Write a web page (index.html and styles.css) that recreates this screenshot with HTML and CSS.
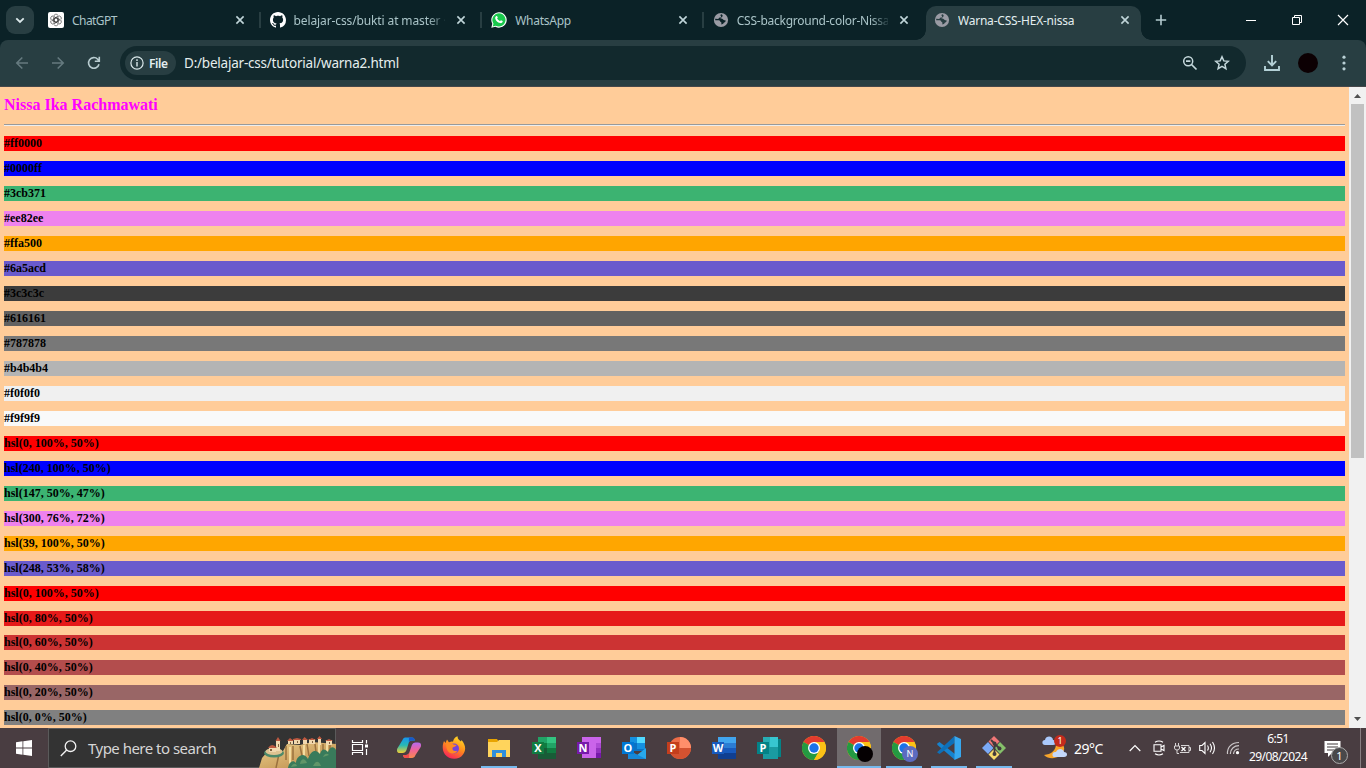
FILE: index.html
```html
<!DOCTYPE html>
<html lang="en">
<head>
<meta charset="utf-8">
<title>Warna-CSS-HEX-nissa</title>
<link rel="stylesheet" href="styles.css">
</head>
<body>
<svg class="defs" width="0" height="0">
  <defs>
    <symbol id="x" viewBox="0 0 10 10"><path d="M1.400 1.400l7.200 7.200M8.600 1.400L1.400 8.600" fill="none" stroke="currentColor" stroke-width="1.600"/></symbol>
    <symbol id="globe" viewBox="0 0 16 16"><circle cx="8" cy="8" r="7.100" fill="#9a9ba4"/><path d="M8.600 2.300c-1.200.3-1.500 1-.8 1.700.8.8.2 1.500-1 1.600-1 .1-.8 1.200-1.700 1.400l-2.900-.2v1.400h3.600c1.300.1 1.100 1.600 2.100 1.900.9.400.3 1.500.5 2.500l1.300-.5c1-.4.6-1.400 1.600-1.700.8-.2 1.100-1 1.700-1.700l-2.200-.8c-1.300-.3-1.200-1.400-2.600-1.300-.7 0-.9-.6-.3-.9 1.200-.5 1.900-1.200 1.700-2.400z" fill="var(--hole)"/></symbol>
    <symbol id="chrome" viewBox="0 0 24 24"><circle cx="12" cy="12" r="12" fill="#fbc116"/><path d="M12 12L1.600 6A12 12 0 0 1 22.400 6z" fill="#e33b2e"/><path d="M1.600 6A12 12 0 0 0 12 24l5.200-9L12 12z" fill="#249a42"/><path d="M12 6h10.400A12 12 0 0 1 12 24l5.200-9z" fill="#fbc116"/><circle cx="12" cy="12" r="6" fill="#fff"/><circle cx="12" cy="12" r="4.700" fill="#1b72e8"/></symbol>
    <linearGradient id="cpa" x1="0" y1="0" x2="0" y2="1"><stop offset="0" stop-color="#1595f0"/><stop offset=".5" stop-color="#28b9b3"/><stop offset="1" stop-color="#f4cf32"/></linearGradient>
    <linearGradient id="cpb" x1="0" y1="0" x2="0" y2="1"><stop offset="0" stop-color="#b469f0"/><stop offset=".5" stop-color="#f06395"/><stop offset="1" stop-color="#f78a4e"/></linearGradient>
    <linearGradient id="ffg" x1=".8" y1="0" x2=".3" y2="1"><stop offset="0" stop-color="#ffe226"/><stop offset=".5" stop-color="#ff8a1c"/><stop offset="1" stop-color="#f7205c"/></linearGradient>
    <linearGradient id="cliff" x1="0" y1="0" x2="1" y2="1"><stop offset="0" stop-color="#edd08c"/><stop offset="1" stop-color="#b88545"/></linearGradient>
  </defs>
</svg>

<header class="tabstrip">
  <div class="tab-search"><svg width="10" height="7" viewBox="0 0 10 7"><path d="M1.300 1.300L5 5l3.700-3.700" fill="none" stroke="#dce9eb" stroke-width="1.800"/></svg></div>
  <div class="tabs">
    <div class="tab">
      <svg class="fav" viewBox="0 0 16 16"><rect width="16" height="16" rx="2" fill="#fff"/><g fill="none" stroke="#333" stroke-width=".6"><path id="petal" d="M5.700 8.900V4.500a2.300 2.300 0 0 1 4.300-1.100M5.700 8.900l2.300 1.300 3.900-2.200"/><use href="#petal" transform="rotate(60 8 8)"/><use href="#petal" transform="rotate(120 8 8)"/><use href="#petal" transform="rotate(180 8 8)"/><use href="#petal" transform="rotate(240 8 8)"/><use href="#petal" transform="rotate(300 8 8)"/></g></svg>
      <span class="title t-gpt">ChatGPT</span><svg class="close"><use href="#x"/></svg>
    </div>
    <div class="tab">
      <svg class="fav" viewBox="0 0 16 16"><path fill="#fff" d="M8 0C3.580 0 0 3.580 0 8c0 3.540 2.290 6.530 5.470 7.590.4.070.55-.17.55-.38 0-.19-.01-.82-.01-1.490-2.010.37-2.530-.49-2.690-.94-.09-.23-.48-.94-.82-1.130-.28-.15-.68-.52-.01-.53.63-.01 1.080.58 1.230.82.72 1.210 1.870.87 2.330.66.070-.52.28-.87.51-1.070-1.780-.2-3.640-.89-3.640-3.950 0-.87.31-1.590.82-2.150-.08-.2-.36-1.020.08-2.120 0 0 .67-.21 2.200.82.64-.18 1.320-.27 2-.27s1.360.09 2 .27c1.530-1.040 2.200-.82 2.200-.82.44 1.100.16 1.920.08 2.120.51.56.82 1.270.82 2.150 0 3.070-1.870 3.750-3.650 3.950.29.25.54.73.54 1.480 0 1.070-.01 1.930-.01 2.200 0 .21.15.46.55.38A8.010 8.010 0 0 0 16 8c0-4.420-3.580-8-8-8z"/></svg>
      <span class="title fade t-git">belajar-css/bukti at master ·</span><svg class="close"><use href="#x"/></svg>
    </div>
    <div class="tab">
      <svg class="fav" viewBox="0 0 16 16"><path d="M.3 15.800l1-4A7.700 7.700 0 1 1 4.400 14.800z" fill="#fff"/><path d="M1.700 14.400l.8-2.700A6.600 6.600 0 1 1 4.700 13.700z" fill="#19c84c"/><path d="M5 4.200c.6-.5 1.100-.3 1.300.2l.5 1.200-.7 1c.7 1.300 1.600 2 2.900 2.600l.9-1 1.800.9c.2 1.800-1.500 2.300-2.500 2C6.500 10.400 4.900 8.900 4.300 6.800 4 5.800 4.400 4.700 5 4.200z" fill="#fff"/></svg>
      <span class="title t-wa">WhatsApp</span><svg class="close"><use href="#x"/></svg>
    </div>
    <div class="tab no-sep">
      <svg class="fav"><use href="#globe"/></svg>
      <span class="title fade t-css">CSS-background-color-Nissa</span><svg class="close"><use href="#x"/></svg>
    </div>
    <div class="tab active no-sep">
      <svg class="fav"><use href="#globe"/></svg>
      <span class="title t-hex">Warna-CSS-HEX-nissa</span><svg class="close"><use href="#x"/></svg>
    </div>
  </div>
  <svg class="new-tab" width="12" height="12" viewBox="0 0 12 12"><path d="M6 .8v10.400M.8 6h10.400" stroke="#b4cbd0" stroke-width="1.600"/></svg>
  <div class="window-controls">
    <svg viewBox="0 0 12 12"><path d="M1 6.500h10" stroke="#fff"/></svg>
    <svg viewBox="0 0 12 12"><path d="M1.500 3.500h7v7h-7zM3.500 3V1.500h7v7H9" fill="none" stroke="#fff"/></svg>
    <svg viewBox="0 0 12 12"><path d="M1 1l10 10M11 1L1 11" stroke="#fff" stroke-width="1.200"/></svg>
  </div>
</header>

<nav class="toolbar">
  <div class="nav-buttons">
    <svg viewBox="0 0 14 14"><path d="M13 7H2M7.300 1.500L1.800 7l5.500 5.500" fill="none" stroke="#657a7f" stroke-width="1.600"/></svg>
    <svg viewBox="0 0 14 14"><path d="M1 7h11M6.700 1.500L12.200 7l-5.500 5.500" fill="none" stroke="#657a7f" stroke-width="1.600"/></svg>
    <svg viewBox="0 0 14 14"><path d="M12 8.200A5.300 5.300 0 1 1 10.700 3.200L12 4.600M12.300.8v4.500H7.800" fill="none" stroke="#b8ccd0" stroke-width="1.600"/></svg>
  </div>
  <div class="omnibox">
    <div class="file-chip"><svg width="14" height="14" viewBox="0 0 14 14"><circle cx="7" cy="7" r="6.100" fill="none" stroke="#dbe9eb" stroke-width="1.200"/><path d="M7 3.300v1.600M7 6.100v4.500" stroke="#dbe9eb" stroke-width="1.400"/></svg><span>File</span></div>
    <span class="url">D:/belajar-css/tutorial/warna2.html</span>
    <svg class="zoom-icon" width="16" height="16" viewBox="0 0 16 16"><circle cx="6.200" cy="6.200" r="4.500" fill="none" stroke="#c5d8dc" stroke-width="1.500"/><path d="M4 6.200h4.400M9.500 9.500l5 5" stroke="#c5d8dc" stroke-width="1.700"/></svg>
    <svg class="star" width="16" height="16" viewBox="0 0 16 16"><path d="M8 1.800l1.800 4.100 4.500.4-3.400 3 1 4.400L8 11.400l-3.900 2.300 1-4.400-3.400-3 4.500-.4z" fill="none" stroke="#c5d8dc" stroke-width="1.500"/></svg>
  </div>
  <svg class="download" width="16" height="16" viewBox="0 0 16 16"><path d="M8 0v10M3.800 6.200L8 10.400l4.200-4.200M1 11v4h14v-4" fill="none" stroke="#b4d1d7" stroke-width="1.900"/></svg>
  <span class="avatar"></span>
  <svg class="kebab" width="4" height="16" viewBox="0 0 4 16"><g fill="#b9d0d5"><circle cx="2" cy="2.200" r="1.600"/><circle cx="2" cy="8" r="1.600"/><circle cx="2" cy="13.800" r="1.600"/></g></svg>
</nav>

<div class="viewport">
  <main class="page">
    <h1 class="name">Nissa Ika Rachmawati</h1>
    <hr class="rule">
    <div class="swatches">
      <h2 style="background-color:#ff0000">#ff0000</h2>
      <h2 style="background-color:#0000ff">#0000ff</h2>
      <h2 style="background-color:#3cb371">#3cb371</h2>
      <h2 style="background-color:#ee82ee">#ee82ee</h2>
      <h2 style="background-color:#ffa500">#ffa500</h2>
      <h2 style="background-color:#6a5acd">#6a5acd</h2>
      <h2 style="background-color:#3c3c3c">#3c3c3c</h2>
      <h2 style="background-color:#616161">#616161</h2>
      <h2 style="background-color:#787878">#787878</h2>
      <h2 style="background-color:#b4b4b4">#b4b4b4</h2>
      <h2 style="background-color:#f0f0f0">#f0f0f0</h2>
      <h2 style="background-color:#f9f9f9">#f9f9f9</h2>
      <h2 style="background-color:hsl(0,100%,50%)">hsl(0, 100%, 50%)</h2>
      <h2 style="background-color:hsl(240,100%,50%)">hsl(240, 100%, 50%)</h2>
      <h2 style="background-color:hsl(147,50%,47%)">hsl(147, 50%, 47%)</h2>
      <h2 style="background-color:hsl(300,76%,72%)">hsl(300, 76%, 72%)</h2>
      <h2 style="background-color:hsl(39,100%,50%)">hsl(39, 100%, 50%)</h2>
      <h2 style="background-color:hsl(248,53%,58%)">hsl(248, 53%, 58%)</h2>
      <h2 style="background-color:hsl(0,100%,50%)">hsl(0, 100%, 50%)</h2>
      <h2 class="snug" style="background-color:hsl(0,80%,50%)">hsl(0, 80%, 50%)</h2>
      <h2 style="background-color:hsl(0,60%,50%)">hsl(0, 60%, 50%)</h2>
      <h2 style="background-color:hsl(0,40%,50%)">hsl(0, 40%, 50%)</h2>
      <h2 style="background-color:hsl(0,20%,50%)">hsl(0, 20%, 50%)</h2>
      <h2 style="background-color:hsl(0,0%,50%)">hsl(0, 0%, 50%)</h2>
    </div>
  </main>
  <aside class="scrollbar">
    <svg width="17" height="17" viewBox="0 0 17 17"><path d="M5 11l3.500-4 3.500 4z" fill="#505050"/></svg>
    <span class="thumb"></span>
    <svg width="17" height="17" viewBox="0 0 17 17"><path d="M5 6l3.500 4L12 6z" fill="#505050"/></svg>
  </aside>
</div>

<footer class="taskbar">
  <div class="start"><svg width="16" height="16" viewBox="0 0 16 16"><path d="M0 2.200l6.500-.9v6.200H0zM7.300 1.200L16 0v7.500H7.300zM0 8.400h6.500v6.300L0 13.800zM7.300 8.400H16V16l-8.700-1.200z" fill="#fff"/></svg></div>
  <div class="search">
    <svg width="17" height="17" viewBox="0 0 17 17"><circle cx="10.500" cy="6.200" r="5.300" fill="none" stroke="#f2f2f2" stroke-width="1.300"/><path d="M6.700 10L.8 16" stroke="#f2f2f2" stroke-width="1.400"/></svg>
    <span>Type here to search</span>
    <svg class="scene" width="77" height="32" viewBox="0 0 77 32">
      <path d="M0 32L3 22 9 15 24 15 28 8 41 9 53 6 77 8V32z" fill="url(#cliff)"/>
      <path d="M20 18l-3 14M27 10v14M34 10v14M41 10l2 10M48 8l2 12M56 8l2 16M64 8v16M71 9v15" stroke="#9a713e" stroke-width="1.500"/>
      <path d="M31 11v20M45 9v12M60 9v10M68 9v13" stroke="#f3dca0" stroke-width="2"/>
      <ellipse cx="15" cy="17" rx="10" ry="4.500" fill="#4d8a6a"/><ellipse cx="15" cy="15.500" rx="8.500" ry="3.500" fill="#dfc391"/>
      <path d="M10 11h7v5h-7zM17 5h4v10h-4zM29 4h5v4h-5zM35 3h6v5h-6zM44 3h4v5h-4zM50 3h6v5h-6zM59 2h3v7h-3zM67 4h6v5h-6z" fill="#f1d8ae"/>
      <path d="M9 12q4-6 9 0zM16.500 5L19 1l2.500 4zM28 5l3-3 4 3zM34 3l4-1 4 1v1h-8zM43 4l2.500-3L49 4zM49 4l4-2 4 2zM58 3l2.500-3L63 3zM66 5l4-2 4 2z" fill="#be5940"/>
      <path d="M11 13h2v2h-2zM19 8h1v3h-1zM31 6h1v2h-1zM38 5h1v2h-1zM53 5h1v2h-1zM70 6h1v2h-1z" fill="#80613e"/>
      <path d="M29 32c1-6 5-9 8-5 0-7 8-12 12-4 3-9 8-10 12-5 2-6 5-5 8-2 2-6 6-6 8-2v18z" fill="#397b5b"/>
      <path d="M32 31c2-4 5-4 6-1M41 28c1-6 5-6 7-1M54 30c3-6 6-5 8 0M64 21c2-4 4-4 6-2" fill="#609668"/>
    </svg>
  </div>
  <div class="task-view"><svg width="18" height="18" viewBox="0 0 18 18"><path d="M1.500 1v2.500h10V1M1.500 16v-2.500h10V16M1.500 5.500h10v6h-10zM15.500 1v3.500M15.500 10v6" fill="none" stroke="#fff" stroke-width="1.200"/><path d="M14 5.500h3v3h-3z" fill="#fff"/></svg></div>
  <div class="apps">
    <div class="app"><svg viewBox="0 0 24 24"><path d="M5.500 4c.7-2 2-2.500 3.500-2.500h6c2 0 2.600 1.500 3 3h-3c-2 0-3 1-3.500 3L9.500 14c-.7 2-2 3-4 3H3c-3 0-3.500-2-2.700-4.500z" fill="url(#cpa)"/><path d="M18.500 19c-.7 2.200-2 3-3.500 3H9c-2 0-2.600-1-3-3h3c2 0 3-1 3.500-3l2.200-6.500c.7-2 2-3 4-3H21c3 0 3.500 2 2.700 4.500z" fill="url(#cpb)"/><path d="M12 1.500h3c2 0 2.600 1.500 3 3h-3c-1.500 0-2.600.7-3.200 2z" fill="#1858ca"/><path d="M6 19h3c1.500 0 2.500-.7 3.100-2L12 22H9c-2 0-2.700-1-3-3z" fill="#f14c4b"/></svg></div>
    <div class="app"><svg viewBox="0 0 24 24"><path d="M2 5l1.500 2L5 3.500l2 3c2-1 3-1 4-.8C11.500 3 13 1 15.500.2c0 3 2 4 3.500 5.300l.5-1.500c4 4.500 5 10 1.500 14.500C17 24.500 7 24 3 18.500 0 14.500.3 9 2 5z" fill="url(#ffg)"/><circle cx="12" cy="12.500" r="5" fill="#7543dc"/><path d="M4 7c3-1 6 0 7.500 1.500l3 .5c-.5 2-3.500 1.500-4 3-.5 2.500 2 4 5 2.500-1.500 4-8 4-10 0-1-2-1.500-4-1.500-7.500z" fill="#ff8a24"/></svg></div>
    <div class="app open"><svg viewBox="0 0 24 24"><path d="M1 3h9l2 3h11v15H1z" fill="#e8a400"/><path d="M1 6h9l2-2h11v17H1z" fill="#ffd45c"/><path d="M5 21v-7h14v7h-4v-4H9v4z" fill="#2f8edb"/></svg></div>
    <div class="app"><svg class="office" viewBox="0 0 24 24"><path d="M6 1h18v22H6z" fill="#21a366"/><path d="M6 7h9v5H6z" fill="#107c41"/><path d="M15 1h9v6h-9z" fill="#33c481"/><path d="M6 12h18v11H6z" fill="#185c37"/><path d="M15 12h9v5h-9z" fill="#107c41"/><path d="M0 6h12v12H0z" fill="#107c41"/><text x="6" y="16">X</text></svg></div>
    <div class="app"><svg class="office" viewBox="0 0 24 24"><path d="M5 1h19v21H5z" fill="#ca64ea"/><path d="M19 7h5v5h-5z" fill="#ae4bd5"/><path d="M19 12h5v5h-5z" fill="#9332bf"/><path d="M19 17h5v5h-5z" fill="#7719aa"/><path d="M0 6h12v12H0z" fill="#7719aa"/><text x="6" y="16">N</text></svg></div>
    <div class="app"><svg class="office" viewBox="0 0 24 24"><path d="M8 1h15v14H8z" fill="#0a72c4"/><path d="M15 1h8v6h-8z" fill="#50d9ff"/><path d="M8 1h7v6H8z" fill="#1490df"/><path d="M15 7h8v6h-8z" fill="#1490df"/><path d="M24 12v11H6v-9l9 5z" fill="#28a8ea"/><path d="M6 14v9h18z" fill="#1688d8"/><path d="M0 6h12v12H0z" fill="#0078d4"/><text x="6" y="16">O</text></svg></div>
    <div class="app"><svg class="office" viewBox="0 0 24 24"><circle cx="13" cy="12" r="11" fill="#ed6c47"/><path d="M13 1a11 11 0 0 1 11 11H13z" fill="#ff8f6b"/><path d="M2 12h22a11 11 0 0 1-22 0z" fill="#d35230"/><path d="M0 6h12v12H0z" fill="#c43e1c"/><text x="6" y="16">P</text></svg></div>
    <div class="app"><svg class="office" viewBox="0 0 24 24"><path d="M6 1h18v6H6z" fill="#41a5ee"/><path d="M6 7h18v5H6z" fill="#2b7cd3"/><path d="M6 12h18v5H6z" fill="#185abd"/><path d="M6 17h18v6H6z" fill="#103f91"/><path d="M0 6h12v12H0z" fill="#185abd"/><text x="6" y="16">W</text></svg></div>
    <div class="app"><svg class="office" viewBox="0 0 24 24"><path d="M18 3h6v18h-6z" fill="#038387"/><path d="M6 1h15v22H6z" fill="#1a9ba1"/><path d="M6 1h15v10H6z" fill="#37c6d0"/><path d="M6 1h7v10H6z" fill="#27aeb4"/><path d="M0 6h12v12H0z" fill="#038387"/><text x="6" y="16">P</text></svg></div>
    <div class="app"><svg viewBox="0 0 24 24"><use href="#chrome"/></svg></div>
    <div class="app open current"><svg viewBox="0 0 24 24"><use href="#chrome"/></svg><span class="profile black"></span></div>
    <div class="app open"><svg viewBox="0 0 24 24"><use href="#chrome"/></svg><span class="profile">N</span></div>
    <div class="app open"><svg viewBox="0 0 24 24"><path d="M0 7.800L2.500 6 18 18v6L.5 9z" fill="#1683ce"/><path d="M0 16.200L17.500 0v7L2.500 18z" fill="#0e70b8"/><path d="M17.500 0L24 3v18l-6.500 3z" fill="#37a8ee"/></svg></div>
    <div class="app open"><svg viewBox="0 0 24 24"><path d="M12 0l5.500 5.500L12 11 6.500 5.500z" fill="#f27777"/><path d="M0 12l6-6 5.500 6L6 18z" fill="#7baaf7"/><path d="M12.500 12L18 6l6 6-6 6z" fill="#85c06a"/><path d="M12 13l5.500 5.500L12 24l-5.500-5.500z" fill="#f7dc6b"/><path d="M9 4l8 8M12.500 7v11" stroke="#413b3d" stroke-width="1.800"/><g fill="#413b3d"><circle cx="12.500" cy="7.500" r="2"/><circle cx="17.500" cy="12.500" r="2"/><circle cx="12.500" cy="18" r="2"/></g></svg></div>
  </div>
  <div class="tray">
    <div class="weather"><svg width="25" height="24" viewBox="0 0 25 24"><path d="M14 5c1 9-4 13-12 14 6 6 18 3 20-5 1-5-3-8-8-9z" fill="#f7a52b"/><path d="M3 9C-.5 9-.5 4 3 4c1-5 8-4 8 0 4 0 4 5 0 5z" fill="#aac9fb"/><path d="M13 21c-4 0-3-6 1-5 2-5 8-3 8 0 4 0 4 5 0 5z" fill="#c4d8fb"/></svg><b>1</b></div>
    <span class="temp">29°C</span>
    <svg class="chev" width="12" height="8" viewBox="0 0 12 8"><path d="M.7 7L6 1.500 11.300 7" fill="none" stroke="#fff" stroke-width="1.200"/></svg>
    <svg class="meet" width="12" height="16" viewBox="0 0 12 16"><path d="M2 2.200q4-2.500 8 0M2 13.800q4 2.500 8 0M1 4.700h7v6.600H1zM8 7l3-1.500v5L8 9" fill="none" stroke="#fff" stroke-width="1.100"/></svg>
    <svg class="battery" width="17" height="13" viewBox="0 0 17 13"><path d="M1.500 1v3M4.500 1v3M.5 4h5v2q0 2-2.500 2T.5 6zM3 8v3.500h2M7 3.500h8v7H6M15 5.500h1.500v3H15" fill="none" stroke="#d8d5d6"/><path d="M7.500 5l4 4M11.500 5l-4 4" stroke="#fff" stroke-width="1.300"/></svg>
    <svg class="speaker" width="17" height="14" viewBox="0 0 17 14"><path d="M.7 4.500H3l3-3v11l-3-3H.7zM8.500 4.500q1.700 2.500 0 5M11 2.700q3 4.300 0 8.600M13.500 1q4 6 0 12" fill="none" stroke="#fff" stroke-width="1.100"/></svg>
    <svg class="wifi" width="14" height="14" viewBox="0 0 14 14"><path d="M1.500 13C1 6 6 1.500 13 1.500M4.300 13C4.300 8 8 4.700 13 4.700M7.500 13c.2-3 2.500-5 5.500-5" fill="none" stroke="#cbc7c9" stroke-width="1.200"/><circle cx="11.500" cy="11.700" r="1.600" fill="#fff"/></svg>
    <div class="clock"><span>6:51</span><span class="date">29/08/2024</span></div>
    <div class="notice"><svg width="17" height="17" viewBox="0 0 17 17"><path d="M.5 1h16v12H8l-4 4v-4H.5z" fill="#fff"/><path d="M3 4h11M3 7h11M3 10h8" stroke="#41383b" stroke-width="1.200"/></svg><b>1</b></div>
  </div>
</footer>
</body>
</html>
```
FILE: styles.css
```css
* { box-sizing: border-box; }
body { margin: 0; width: 1366px; height: 768px; overflow: hidden; display: flex; flex-direction: column; background: #0b2227; font-family: "Noto Sans", sans-serif; }
svg { display: block; flex: none; }
.defs { position: absolute; }

.tabstrip { height: 40px; flex: none; display: flex; align-items: center; background: #0b2227; }
.tab-search { width: 28px; height: 28px; margin: 0 4px 0 6px; border-radius: 9px; background: #283e42; display: flex; align-items: center; justify-content: center; }
.tabs { display: flex; height: 40px; width: 1108px; flex: none; }
.tab { --hole: #0b2227; position: relative; width: 221.6px; display: flex; align-items: center; padding: 0 15px 0 10px; color: #aac4c8; }
.tab:not(.no-sep)::after { content: ""; position: absolute; right: -1px; top: 12px; width: 2px; height: 16px; background: #283e42; }
.fav { width: 16px; height: 16px; margin-right: 8px; }
.title { font-size: 12px; line-height: 18px; padding-top: 1px; white-space: nowrap; overflow: hidden; width: 152px; }
.fade { -webkit-mask-image: linear-gradient(90deg, #000 134px, transparent 154px); mask-image: linear-gradient(90deg, #000 134px, transparent 154px); }
.close { width: 10px; height: 10px; margin-left: 11px; color: #c0d5d9; }
.tab.active { --hole: #283e42; width: 215px; height: 34px; margin: 6px 0 0 1.600px; padding: 0 0 6px 8px; border-radius: 10px 10px 0 0; background: #283e42; color: #e3eef0; }
.tab.active .close { margin-left: 10px; }
.tab.active::before, .tab.active::after { content: ""; position: absolute; bottom: 0; width: 10px; height: 10px; }
.tab.active::before { left: -10px; background: radial-gradient(circle at 0 0, transparent 9.500px, #283e42 10px); }
.tab.active::after { right: -10px; background: radial-gradient(circle at 100% 0, transparent 9.500px, #283e42 10px); }
.t-gpt { letter-spacing: -.55px; }
.t-git { letter-spacing: -.12px; }
.t-wa { letter-spacing: -.25px; }
.t-css { letter-spacing: -.25px; }
.t-hex { letter-spacing: -.22px; }
.new-tab { margin-left: 9px; }
.window-controls { display: flex; gap: 34px; margin-left: auto; padding-right: 17px; }
.window-controls svg { width: 12px; height: 12px; }

.toolbar { height: 47px; flex: none; display: flex; align-items: center; background: #283e42; border-radius: 8px 8px 0 0; border-bottom: 1px solid #45474a; }
.nav-buttons { display: flex; gap: 22px; padding-left: 15px; width: 120px; }
.nav-buttons svg { width: 14px; height: 14px; }
.omnibox { width: 1126px; height: 34px; display: flex; align-items: center; border-radius: 17px; background: #12292d; padding: 0 16px 0 5px; }
.file-chip { width: 51px; height: 24px; display: flex; align-items: center; gap: 5px; padding-left: 5px; border-radius: 12px; background: #283e42; color: #e3eef0; font-size: 12px; font-weight: 600; letter-spacing: -.4px; }
.url { margin-left: 8px; color: #e5eeee; font-size: 13.500px; letter-spacing: -.22px; }
.zoom-icon { margin-left: auto; }
.star { margin-left: 16px; }
.download { margin-left: 18px; }
.avatar { width: 20px; height: 20px; margin-left: 18px; border-radius: 50%; background: #0c0003; }
.kebab { margin-left: 24px; }

.viewport { flex: 1; min-height: 0; display: flex; }
.page { flex: 1; padding: 0 4px; overflow: hidden; background: #ffcc99; font-family: "Liberation Serif", serif; }
.name { margin: 9px 0 10px; font-size: 16px; line-height: 18px; color: #f0f; }
.rule { height: 2px; margin: 0 0 10px; border: 0; border-top: 1px solid #9a9a9a; border-bottom: 1px solid #eee; }
.swatches h2 { height: 15px; margin: 0 0 10px; font-size: 12px; line-height: 14px; color: #000; }
.swatches .snug { margin-bottom: 9px; }
.scrollbar { width: 17px; background: #f1f1f1; display: flex; flex-direction: column; }
.thumb { width: 13px; height: 354px; margin: 0 2px auto; background: #c1c1c1; }

.taskbar { height: 40px; flex: none; display: flex; background: #493d41; color: #fff; }
.start { width: 48px; display: flex; align-items: center; justify-content: center; }
.search { width: 288px; display: flex; align-items: center; position: relative; padding-left: 11px; border: 1px solid #5a5a5a; background: #333; color: #d6d6d6; font-size: 15px; letter-spacing: -.52px; }
.search span { margin-left: 11px; line-height: 20px; }
.scene { position: absolute; right: -1px; bottom: -1px; }
.task-view { width: 51px; display: flex; align-items: center; padding-left: 15px; }
.apps { display: flex; }
.app { position: relative; width: 45px; display: flex; align-items: center; padding-left: 10px; }
.app svg { width: 24px; height: 24px; }
.app.open::after { content: ""; position: absolute; left: 4px; bottom: 0; width: 36px; height: 2px; background: #76b9ed; }
.app.current { background: linear-gradient(90deg, #716b6d 44px, transparent 44px); }
.app.current::after { left: 0; width: 44px; }
.office text { fill: #fff; font: bold 11px "Open Sans", sans-serif; text-anchor: middle; }
.profile { position: absolute; left: 20px; top: 18px; width: 16px; height: 16px; border-radius: 50%; background: #5c6bc0; font-size: 9px; line-height: 16px; text-align: center; }
.profile.black { background: #050002; }
.tray { flex: 1; display: flex; align-items: center; padding-left: 25px; }
.weather { position: relative; width: 25px; }
.weather b { position: absolute; left: 12px; top: -1px; width: 12px; height: 12px; border-radius: 50%; background: #c42b1c; font-size: 9px; line-height: 12px; font-weight: 400; text-align: center; }
.temp { width: 55px; margin-left: 7px; font-size: 14px; letter-spacing: -.5px; }
.meet { margin-left: 12px; }
.battery { margin-left: 9px; }
.speaker { margin-left: 8px; }
.wifi { margin-left: 10px; }
.clock { width: 60px; margin-left: 8px; display: flex; flex-direction: column; align-items: center; font-size: 12px; line-height: 18px; letter-spacing: -.6px; }
.notice { position: relative; height: 40px; width: 37px; margin-left: 16px; padding-top: 12px; border-right: 1px solid #887f82; }
.notice b { position: absolute; left: 7px; top: 19px; width: 17px; height: 17px; border: 1px solid #aaa; border-radius: 50%; background: #49484a; font-size: 11px; font-weight: 400; line-height: 15px; text-align: center; }
```
